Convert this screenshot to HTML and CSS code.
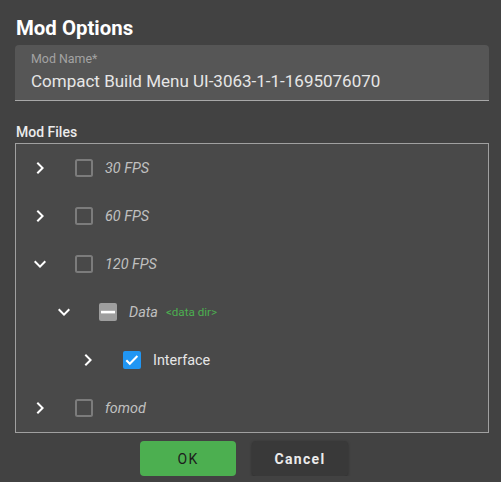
FILE: index.html
```html
<!DOCTYPE html>
<html>
<head>
<meta charset="utf-8">
<link rel="stylesheet" href="styles.css">
</head>
<body>
<div class="dialog">
  <h1 class="title">Mod Options</h1>
  <div class="field">
    <div class="field-label">Mod Name*</div>
    <div class="field-value">Compact Build Menu UI-3063-1-1-1695076070</div>
  </div>
  <div class="section-label">Mod Files</div>
  <div class="tree">
    <div class="row lvl0">
      <svg class="chev" viewBox="0 0 24 24"><path d="M10 6L8.59 7.41 13.17 12l-4.58 4.59L10 18l6-6z"/></svg>
      <svg class="cb" viewBox="0 0 24 24"><rect x="4" y="4" width="16" height="16" rx="1.5" class="cb-empty"/></svg>
      <span class="name">30 FPS</span>
    </div>
    <div class="row lvl0">
      <svg class="chev" viewBox="0 0 24 24"><path d="M10 6L8.59 7.41 13.17 12l-4.58 4.59L10 18l6-6z"/></svg>
      <svg class="cb" viewBox="0 0 24 24"><rect x="4" y="4" width="16" height="16" rx="1.5" class="cb-empty"/></svg>
      <span class="name">60 FPS</span>
    </div>
    <div class="row lvl0">
      <svg class="chev" viewBox="0 0 24 24"><path d="M16.59 8.59L12 13.17 7.41 8.59 6 10l6 6 6-6z"/></svg>
      <svg class="cb" viewBox="0 0 24 24"><rect x="4" y="4" width="16" height="16" rx="1.5" class="cb-empty"/></svg>
      <span class="name">120 FPS</span>
    </div>
    <div class="row lvl1">
      <svg class="chev" viewBox="0 0 24 24"><path d="M16.59 8.59L12 13.17 7.41 8.59 6 10l6 6 6-6z"/></svg>
      <svg class="cb" viewBox="0 0 24 24"><rect x="3" y="3" width="18" height="18" rx="2" class="cb-ind"/><rect x="5" y="10.8" width="14" height="2.6" fill="#ffffff"/></svg>
      <span class="name">Data</span>
      <span class="tag">&lt;data dir&gt;</span>
    </div>
    <div class="row lvl2">
      <svg class="chev" viewBox="0 0 24 24"><path d="M10 6L8.59 7.41 13.17 12l-4.58 4.59L10 18l6-6z"/></svg>
      <svg class="cb" viewBox="0 0 24 24"><rect x="3" y="3" width="18" height="18" rx="2" class="cb-on"/><path d="M6.3 12.2l3.5 3.5 7.6-7.6" fill="none" stroke="#ffffff" stroke-width="2.1"/></svg>
      <span class="name plain">Interface</span>
    </div>
    <div class="row lvl0">
      <svg class="chev" viewBox="0 0 24 24"><path d="M10 6L8.59 7.41 13.17 12l-4.58 4.59L10 18l6-6z"/></svg>
      <svg class="cb" viewBox="0 0 24 24"><rect x="4" y="4" width="16" height="16" rx="1.5" class="cb-empty"/></svg>
      <span class="name">fomod</span>
    </div>
  </div>
  <div class="actions">
    <button class="btn btn-ok">OK</button>
    <button class="btn btn-cancel">Cancel</button>
  </div>
</div>
</body>
</html>
```
FILE: styles.css
```css
html, body {
  margin: 0;
  padding: 0;
  background: #424242;
  font-family: Roboto, "Liberation Sans", sans-serif;
  color: #e0e0e0;
}

.dialog {
  padding: 16px 12px 0 15px;
}

.title {
  margin: 0 0 5px 1px;
  font-size: 20.4px;
  line-height: 24px;
  font-weight: 700;
  color: #ffffff;
}

.field {
  background: #565656;
  border-radius: 4px 4px 0 0;
  border-bottom: 1px solid #a8a8a8;
  padding: 6px 16px 9.5px 16px;
}

.field-label {
  font-size: 12.4px;
  line-height: 16px;
  color: #a3a3a3;
  margin-bottom: 3.5px;
}

.field-value {
  font-size: 17px;
  line-height: 20px;
  color: #e6e6e6;
}

.section-label {
  margin: 21px 0 1px 1px;
  font-size: 14px;
  line-height: 20px;
  font-weight: 500;
  color: #ececec;
}

.tree {
  background: #494949;
  border: 1px solid #a0a0a0;
}

.row {
  display: flex;
  align-items: center;
  height: 48px;
  padding-left: 12px;
}

.row.lvl1 { padding-left: 36px; }
.row.lvl2 { padding-left: 60px; }

.chev {
  width: 24px;
  height: 24px;
  fill: #ffffff;
  margin-right: 20px;
  flex: none;
}

.cb {
  width: 24px;
  height: 24px;
  margin-right: 9px;
  flex: none;
}

.cb-empty {
  fill: none;
  stroke: #7c7c7c;
  stroke-width: 2;
}

.cb-ind { fill: #9e9e9e; }
.cb-on { fill: #2196f3; }

.name {
  font-size: 14.4px;
  font-style: italic;
  color: #c0c0c0;
}

.name.plain {
  font-style: normal;
  color: #e6e6e6;
}

.tag {
  margin-left: 8px;
  font-size: 11.6px;
  color: #4caf50;
}

.actions {
  display: flex;
  justify-content: center;
  gap: 16px;
  padding: 8px 16px 0 0;
}

.btn {
  width: 96px;
  height: 35px;
  border: none;
  border-radius: 4px;
  font-family: Roboto, "Liberation Sans", sans-serif;
  font-size: 14px;
  letter-spacing: 1.3px;
}

.btn-ok {
  background: #4caf50;
  color: #1c1c1c;
  font-weight: 400;
}

.btn-cancel {
  background: #393939;
  color: #ececec;
  font-weight: 700;
  box-shadow: 0 1px 3px rgba(0, 0, 0, 0.35);
}
```
